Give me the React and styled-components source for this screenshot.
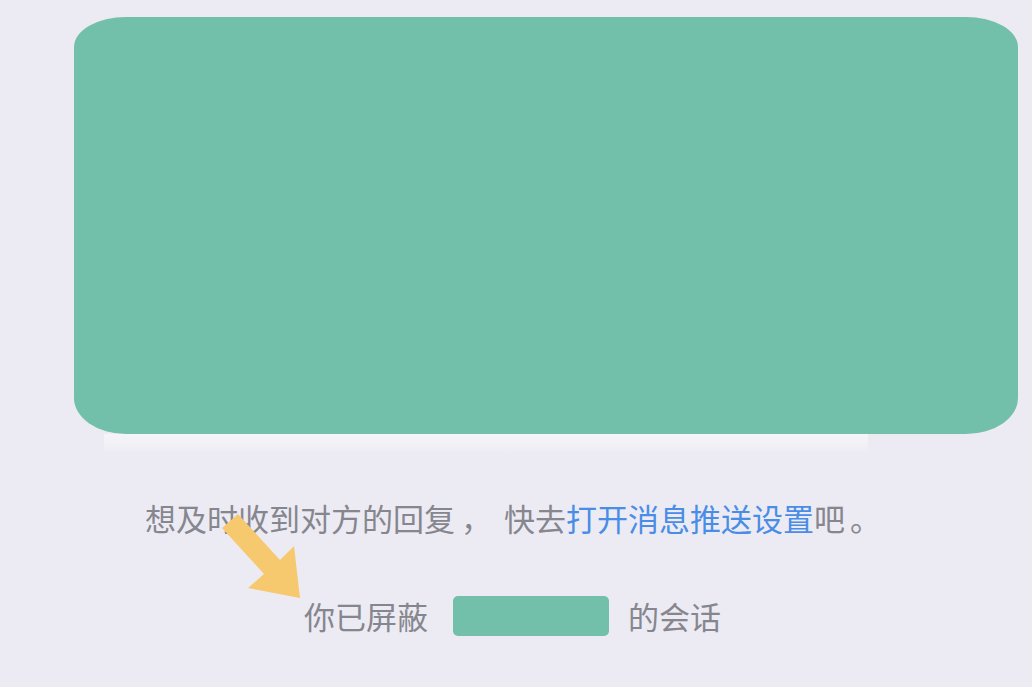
import React from 'react';
import styled, { createGlobalStyle } from 'styled-components';

const GlobalStyle = createGlobalStyle`
  html, body {
    margin: 0;
    padding: 0;
    background: #ecebf3;
  }
  body {
    font-family: 'Noto Sans CJK SC', 'Noto Sans', sans-serif;
  }
`

const Page = styled.div`
  position: relative;
  width: 1032px;
  height: 687px;
  overflow: hidden;
  background: #ecebf3;
  padding-top: 17px;
  box-sizing: border-box;
`

const Bubble = styled.div`
  margin-left: 74px;
  width: 944px;
  height: 417px;
  background: #72c0aa;
  border-radius: 52px 52px 52px 52px / 30px 30px 36px 36px;
`

const BubbleShadow = styled.div`
  margin-left: 104px;
  width: 764px;
  height: 20px;
  background: linear-gradient(#f6f6f9, #ecebf3);
`

const Notices = styled.div`
  display: flex;
  flex-direction: column;
  padding-top: 46px;
  gap: 60px;
`

const Line = styled.div`
  display: flex;
  align-items: center;
  padding-left: ${p => p.$left}px;
  font-size: 31px;
  line-height: 36px;
  color: #86868e;
  white-space: nowrap;
`

const Segment = styled.span`
  flex: none;
  color: ${p => (p.$link ? '#4a8de6' : 'inherit')};
`

const Punct = styled.span`
  flex: none;
  display: block;
  box-sizing: border-box;
  min-width: ${p => p.$w}px;
  padding-left: ${p => p.$pad}px;
`

const Redacted = styled.span`
  flex: none;
  display: block;
  width: 156px;
  height: 40px;
  margin: 0 19px 0 25px;
  border-radius: 5px;
  background: #72c0aa;
`

const Arrow = styled.svg`
  position: absolute;
  left: 218px;
  top: 508px;
`

export default function App() {
  return (
    <>
      <GlobalStyle />
      <Page>
        <Bubble />
        <BubbleShadow />
        <Notices>
          <Line $left={145}>
            <Segment>想及时收到对方的回复</Segment>
            <Punct $w={49} $pad={6}>，</Punct>
            <Segment>快去</Segment>
            <Segment $link>打开消息推送设置</Segment>
            <Segment>吧</Segment>
            <Punct $w={36} $pad={5}>。</Punct>
          </Line>
          <Line $left={304}>
            <Segment>你已屏蔽</Segment>
            <Redacted />
            <Segment>的会话</Segment>
          </Line>
        </Notices>
        <Arrow width="90" height="95" viewBox="0 0 90 95">
          <polygon
            points="4,20 20,6 62,52 76,38 82,90 30,80 46,66"
            fill="#f6c96f"
          />
        </Arrow>
      </Page>
    </>
  )
}
